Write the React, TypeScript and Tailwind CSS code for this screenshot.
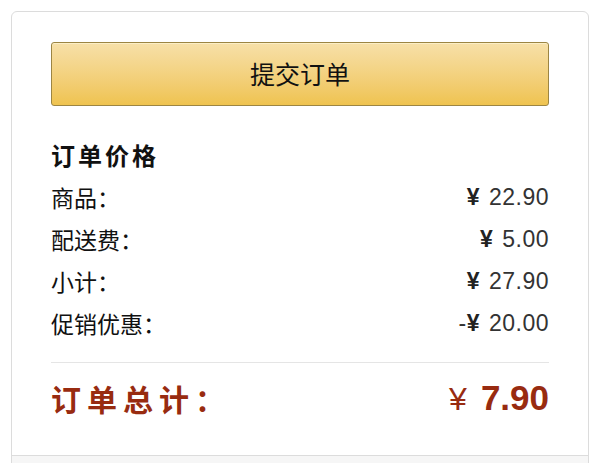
import React from "react";

const rows = [
  { label: "商品：", sign: "", value: "22.90" },
  { label: "配送费：", sign: "", value: "5.00" },
  { label: "小计：", sign: "", value: "27.90" },
  { label: "促销优惠：", sign: "-", value: "20.00" },
];

const cjk = "font-['Noto_Sans_CJK_SC','Noto_Sans',sans-serif]";
const num = "font-['Liberation_Sans','Noto_Sans_CJK_SC',sans-serif]";

export default function App() {
  return (
    <div className="w-[600px] h-[463px] bg-white overflow-hidden pt-[11px] px-[11px]">
      <div className="border border-[#dcdcdc] rounded-[6px] bg-white">
        <div className="px-[39px] pt-[30px] pb-[22px]">
          {/* submit button */}
          <button
            className={`w-full h-[64px] rounded-[3px] border border-[#9c8543] bg-gradient-to-b from-[#f7e0a8] to-[#efc34f] shadow-[inset_0_1px_0_#fcefc6] text-[25px] text-[#111] ${cjk}`}
          >
            提交订单
          </button>

          {/* order price */}
          <div className={`mt-[28px] h-[42px] flex items-center text-[24px] font-bold tracking-[3px] text-[#111] ${cjk}`}>
            订单价格
          </div>
          {rows.map((r) => (
            <div key={r.label} className="h-[42px] flex items-center justify-between">
              <span className={`text-[23px] text-[#111] ${cjk}`}>{r.label}</span>
              <span className={`text-[23px] text-[#333] tracking-[0.5px] flex items-baseline ${num}`}>
                {r.sign}
                <span className="font-bold text-[#222]">¥</span>
                <span className="ml-[9px]">{r.value}</span>
              </span>
            </div>
          ))}

          <div className="mt-[18px] border-t border-[#e5e5e5]" />

          {/* total */}
          <div className="h-[70px] flex items-center justify-between text-[#982b10]">
            <span className={`text-[30px] font-bold tracking-[6px] ${cjk}`}>订单总计：</span>
            <span className={`${num} flex items-baseline`}>
              <span className="text-[32px]">¥</span>
              <span className="text-[35px] font-bold ml-[14px]">7.90</span>
            </span>
          </div>
        </div>
        <div className="h-[20px] border-t border-[#dcdcdc] bg-[#f6f6f6]" />
      </div>
    </div>
  );
}
